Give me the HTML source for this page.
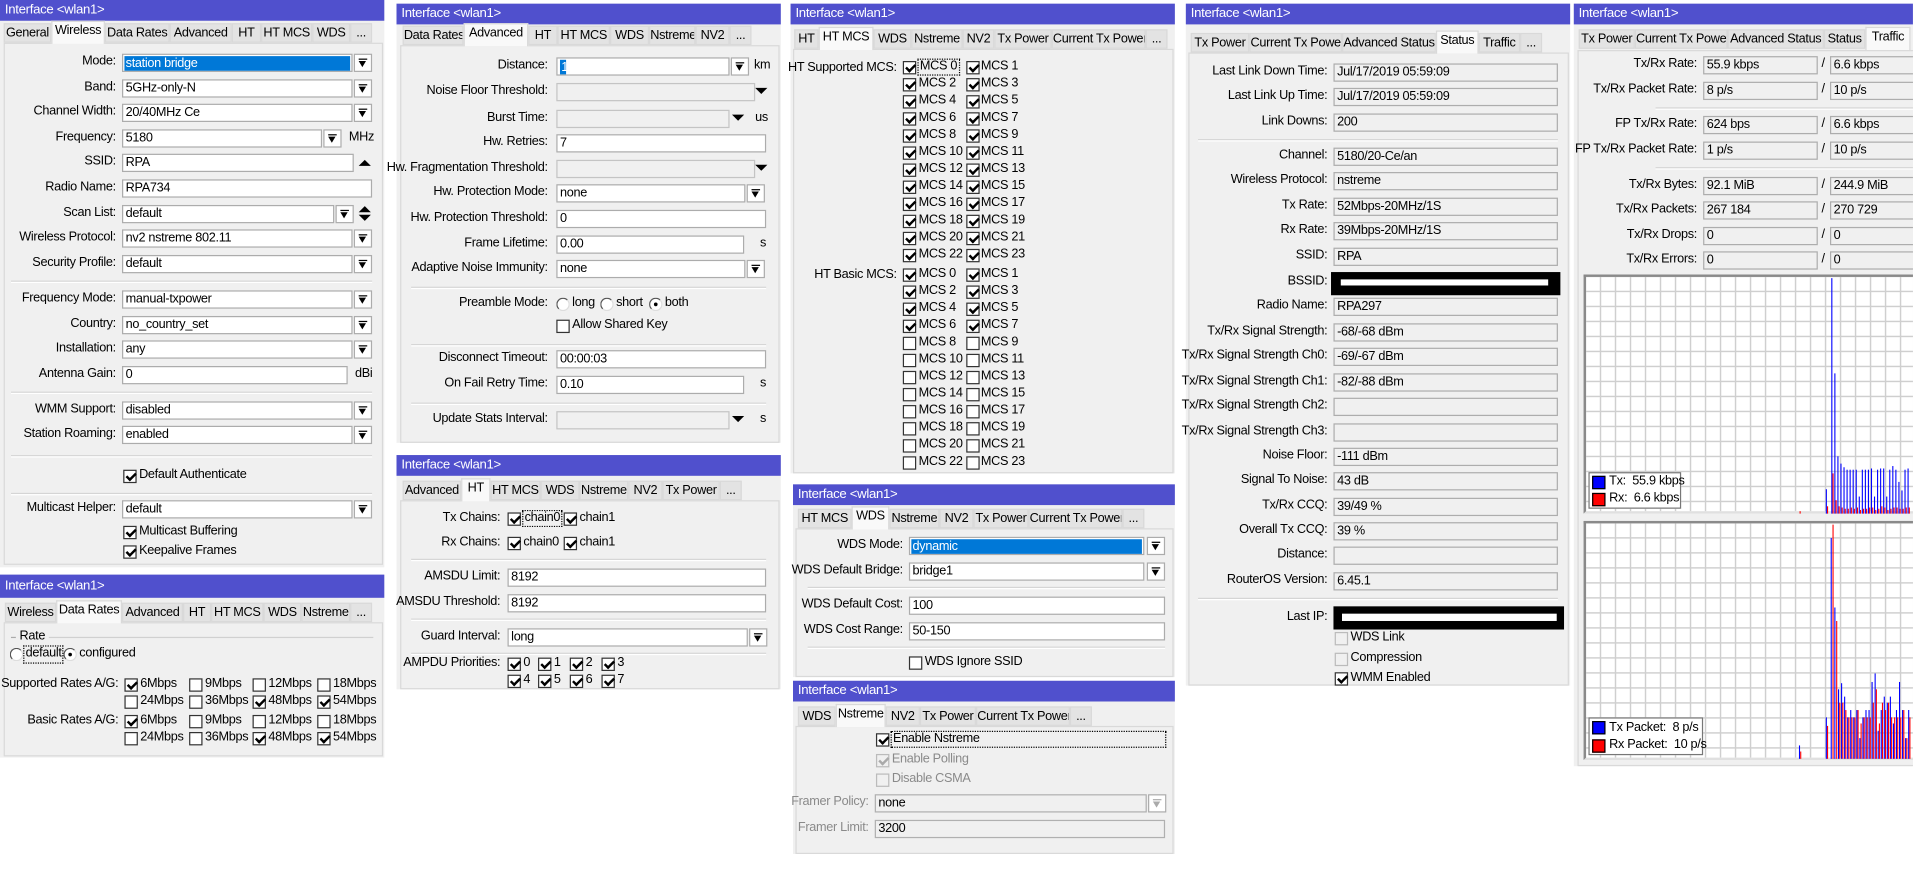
<!DOCTYPE html>
<html><head><meta charset="utf-8"><style>
*{box-sizing:border-box}
html,body{margin:0;padding:0;background:#fff;overflow:hidden}
#w{position:absolute;left:0;top:0;width:1568px;height:728px;transform:scale(1.22);transform-origin:0 0;overflow:hidden;font-family:"Liberation Sans",sans-serif;font-size:10.4px;letter-spacing:-0.25px;color:#000}
#w div,#w span{position:absolute;white-space:nowrap}
.p{background:#f0f0f0}
.t{background:#5050cd;color:#fff;height:17px;line-height:17px;padding-left:4px;font-size:10.8px}
.tb{height:16px;line-height:15px;border:1px solid #d9d9d9;background:#e3e3e3;text-align:center;overflow:hidden}
.tb.a{background:#f9f9f9;height:19px;border-bottom:none;line-height:15px}
.cb{border:1px solid #d9d9d9;background:#f0f0f0}
.l{text-align:right;line-height:14px}
.f{height:15px;line-height:13px;background:#fff;border:1px solid #acacac;padding-left:2px;overflow:hidden}
.f.g{background:#f0f0f0;border-color:#adadad}
.f.d{background:#f0f0f0;border-color:#c4c4c4}
.s{background:#0078d7;color:#fff;position:static!important;display:inline-block;padding:0 1px;width:100%}
.b{width:15px;height:15px;border:1px solid #acacac;background:#fff}
.b::before{content:"";position:absolute;left:3px;top:3px;width:7px;height:1px;background:#000}
.b::after{content:"";position:absolute;left:3px;top:5px;border-left:3.5px solid transparent;border-right:3.5px solid transparent;border-top:5px solid #000}
.b.x::before{background:#aaa}.b.x::after{border-top-color:#aaa}
.tr{width:0;height:0;border-left:5px solid transparent;border-right:5px solid transparent;border-top:5px solid #000}
.c{width:11px;height:11px;border:1px solid #333;background:#fff}
.c.k::after{content:"";position:absolute;left:3px;top:0px;width:3px;height:6px;border:solid #000;border-width:0 2px 2px 0;transform:rotate(45deg)}
.c.x{border-color:#bbb;background:#f0f0f0}.c.x.k::after{border-color:#aaa}
.r{width:11px;height:11px;border-radius:50%;border:1px solid #555;border-right-color:#ddd;border-bottom-color:#ddd;background:#fff}
.r.on::after{content:"";position:absolute;left:3px;top:3px;width:3px;height:3px;border-radius:50%;background:#000}
.sp{height:2px;border-top:1px solid #d5d5d5;border-bottom:1px solid #fff}
.u{line-height:14px}
.gr{background-color:#fff;border:2px solid #8a8a8a;border-right:none;border-bottom-color:#e0e0e0;background-image:linear-gradient(#cfcfcf 1px,transparent 1px),linear-gradient(90deg,#cfcfcf 1px,transparent 1px);background-size:12.3px 12.3px;background-position:-1px -1px}
.lg{background:#fff;border:1px solid #777}
.lg i{position:absolute;width:11px;height:11px;border:1px solid #000}
.gy{color:#8a8a8a}
</style></head><body><div id="w">

<!-- P1 Wireless -->
<div class="p" style="left:0;top:0;width:315px;height:465px"></div>
<div class="t" style="left:0;top:0;width:315px">Interface &lt;wlan1&gt;</div>
<div class="cb" style="left:3px;top:35px;width:311px;height:428px"></div>
<div class="tb" style="left:3px;top:19px;width:39px">General</div>
<div class="tb a" style="left:42px;top:17px;width:44px">Wireless</div>
<div class="tb" style="left:86px;top:19px;width:53px">Data Rates</div>
<div class="tb" style="left:139px;top:19px;width:51px">Advanced</div>
<div class="tb" style="left:190px;top:19px;width:24px">HT</div>
<div class="tb" style="left:214px;top:19px;width:42px">HT MCS</div>
<div class="tb" style="left:256px;top:19px;width:31px">WDS</div>
<div class="tb" style="left:287px;top:19px;width:18px">...</div>

<div class="l" style="right:1473px;top:44px">Mode:</div><div class="f" style="left:100px;top:44px;width:189px;padding:1px"><span class="s">station bridge</span></div><div class="b" style="left:290px;top:44px"></div>
<div class="l" style="right:1473px;top:65px">Band:</div><div class="f" style="left:100px;top:65px;width:189px">5GHz-only-N</div><div class="b" style="left:290px;top:65px"></div>
<div class="l" style="right:1473px;top:85px">Channel Width:</div><div class="f" style="left:100px;top:85px;width:189px">20/40MHz Ce</div><div class="b" style="left:290px;top:85px"></div>
<div class="l" style="right:1473px;top:106px">Frequency:</div><div class="f" style="left:100px;top:106px;width:164px">5180</div><div class="b" style="left:265px;top:106px"></div><div class="u" style="left:286px;top:106px">MHz</div>
<div class="l" style="right:1473px;top:126px">SSID:</div><div class="f" style="left:100px;top:126px;width:190px">RPA</div><div class="tr" style="left:294px;top:131px;border-top:none;border-bottom:5px solid #000"></div>
<div class="l" style="right:1473px;top:147px">Radio Name:</div><div class="f" style="left:100px;top:147px;width:205px">RPA734</div>
<div class="l" style="right:1473px;top:168px">Scan List:</div><div class="f" style="left:100px;top:168px;width:174px">default</div><div class="b" style="left:275px;top:168px"></div><div class="tr" style="left:294px;top:169px;border-top:none;border-bottom:5px solid #000"></div><div class="tr" style="left:294px;top:176px"></div>
<div class="l" style="right:1473px;top:188px">Wireless Protocol:</div><div class="f" style="left:100px;top:188px;width:189px">nv2 nstreme 802.11</div><div class="b" style="left:290px;top:188px"></div>
<div class="l" style="right:1473px;top:209px">Security Profile:</div><div class="f" style="left:100px;top:209px;width:189px">default</div><div class="b" style="left:290px;top:209px"></div>
<div class="sp" style="left:9px;top:230px;width:296px"></div>
<div class="l" style="right:1473px;top:238px">Frequency Mode:</div><div class="f" style="left:100px;top:238px;width:189px">manual-txpower</div><div class="b" style="left:290px;top:238px"></div>
<div class="l" style="right:1473px;top:259px">Country:</div><div class="f" style="left:100px;top:259px;width:189px">no_country_set</div><div class="b" style="left:290px;top:259px"></div>
<div class="l" style="right:1473px;top:279px">Installation:</div><div class="f" style="left:100px;top:279px;width:189px">any</div><div class="b" style="left:290px;top:279px"></div>
<div class="l" style="right:1473px;top:300px">Antenna Gain:</div><div class="f" style="left:100px;top:300px;width:185px">0</div><div class="u" style="left:291px;top:300px">dBi</div>
<div class="sp" style="left:9px;top:321px;width:296px"></div>
<div class="l" style="right:1473px;top:329px">WMM Support:</div><div class="f" style="left:100px;top:329px;width:189px">disabled</div><div class="b" style="left:290px;top:329px"></div>
<div class="l" style="right:1473px;top:349px">Station Roaming:</div><div class="f" style="left:100px;top:349px;width:189px">enabled</div><div class="b" style="left:290px;top:349px"></div>
<div class="sp" style="left:9px;top:373px;width:296px"></div>
<div class="c k" style="left:101px;top:385px"></div><div class="u" style="left:114px;top:383px">Default Authenticate</div>
<div class="sp" style="left:9px;top:404px;width:296px"></div>
<div class="l" style="right:1473px;top:410px">Multicast Helper:</div><div class="f" style="left:100px;top:410px;width:189px">default</div><div class="b" style="left:290px;top:410px"></div>
<div class="c k" style="left:101px;top:431px"></div><div class="u" style="left:114px;top:429px">Multicast Buffering</div>
<div class="c k" style="left:101px;top:447px"></div><div class="u" style="left:114px;top:445px">Keepalive Frames</div>

<!-- P2 Data Rates -->
<div class="p" style="left:0;top:471px;width:315px;height:150px"></div>
<div class="t" style="left:0;top:471px;width:315px;height:19px;line-height:19px">Interface &lt;wlan1&gt;</div>
<div class="cb" style="left:3px;top:510px;width:311px;height:110px"></div>
<div class="tb" style="left:4px;top:494px;width:42px">Wireless</div>
<div class="tb a" style="left:46px;top:492px;width:54px">Data Rates</div>
<div class="tb" style="left:100px;top:494px;width:50px">Advanced</div>
<div class="tb" style="left:150px;top:494px;width:23px">HT</div>
<div class="tb" style="left:173px;top:494px;width:43px">HT MCS</div>
<div class="tb" style="left:216px;top:494px;width:31px">WDS</div>
<div class="tb" style="left:247px;top:494px;width:40px">Nstreme</div>
<div class="tb" style="left:287px;top:494px;width:18px">...</div>
<div style="left:9px;top:522px;width:4px;height:1px;background:#aaa"></div>
<div class="u" style="left:16px;top:515px">Rate</div>
<div style="left:40px;top:522px;width:266px;height:1px;background:#d0d0d0"></div>
<div class="r" style="left:8px;top:531px"></div><div class="u" style="left:19px;top:529px;border:1px dotted #000;padding:0 1px;line-height:12px;height:15px">default</div>
<div class="r on" style="left:52px;top:531px"></div><div class="u" style="left:65px;top:529px">configured</div>
<div class="l" style="right:1471px;top:554px">Supported Rates A/G:</div>
<div class="l" style="right:1471px;top:584px">Basic Rates A/G:</div>
<div class="c k" style="left:102px;top:556px"></div><div class="u" style="left:115px;top:554px">6Mbps</div>
<div class="c" style="left:155px;top:556px"></div><div class="u" style="left:168px;top:554px">9Mbps</div>
<div class="c" style="left:207px;top:556px"></div><div class="u" style="left:220px;top:554px">12Mbps</div>
<div class="c" style="left:260px;top:556px"></div><div class="u" style="left:273px;top:554px">18Mbps</div>
<div class="c" style="left:102px;top:570px"></div><div class="u" style="left:115px;top:568px">24Mbps</div>
<div class="c" style="left:155px;top:570px"></div><div class="u" style="left:168px;top:568px">36Mbps</div>
<div class="c k" style="left:207px;top:570px"></div><div class="u" style="left:220px;top:568px">48Mbps</div>
<div class="c k" style="left:260px;top:570px"></div><div class="u" style="left:273px;top:568px">54Mbps</div>
<div class="c k" style="left:102px;top:586px"></div><div class="u" style="left:115px;top:584px">6Mbps</div>
<div class="c" style="left:155px;top:586px"></div><div class="u" style="left:168px;top:584px">9Mbps</div>
<div class="c" style="left:207px;top:586px"></div><div class="u" style="left:220px;top:584px">12Mbps</div>
<div class="c" style="left:260px;top:586px"></div><div class="u" style="left:273px;top:584px">18Mbps</div>
<div class="c" style="left:102px;top:600px"></div><div class="u" style="left:115px;top:598px">24Mbps</div>
<div class="c" style="left:155px;top:600px"></div><div class="u" style="left:168px;top:598px">36Mbps</div>
<div class="c k" style="left:207px;top:600px"></div><div class="u" style="left:220px;top:598px">48Mbps</div>
<div class="c k" style="left:260px;top:600px"></div><div class="u" style="left:273px;top:598px">54Mbps</div>

<!-- P3 Advanced -->
<div class="p" style="left:325px;top:3px;width:315px;height:360px"></div>
<div class="t" style="left:325px;top:3px;width:315px">Interface &lt;wlan1&gt;</div>
<div class="cb" style="left:328px;top:37px;width:311px;height:326px"></div>
<div class="tb" style="left:330px;top:21px;width:50px">Data Rates</div>
<div class="tb a" style="left:380px;top:19px;width:53px">Advanced</div>
<div class="tb" style="left:433px;top:21px;width:24px">HT</div>
<div class="tb" style="left:457px;top:21px;width:43px">HT MCS</div>
<div class="tb" style="left:500px;top:21px;width:32px">WDS</div>
<div class="tb" style="left:532px;top:21px;width:38px">Nstreme</div>
<div class="tb" style="left:570px;top:21px;width:28px">NV2</div>
<div class="tb" style="left:598px;top:21px;width:18px">...</div>
<div class="l" style="right:1119px;top:47px">Distance:</div><div class="f" style="left:456px;top:47px;width:142px;padding:1px 0 0 2px"><span class="s" style="width:5px">1</span></div><div class="b" style="left:599px;top:47px"></div><div class="u" style="left:618px;top:47px">km</div>
<div class="l" style="right:1119px;top:68px">Noise Floor Threshold:</div><div class="f d" style="left:456px;top:68px;width:163px"></div><div class="tr" style="left:619px;top:72px"></div>
<div class="l" style="right:1119px;top:90px">Burst Time:</div><div class="f d" style="left:456px;top:90px;width:142px"></div><div class="tr" style="left:600px;top:94px"></div><div class="u" style="left:619px;top:90px">us</div>
<div class="l" style="right:1119px;top:110px">Hw. Retries:</div><div class="f" style="left:456px;top:110px;width:172px">7</div>
<div class="l" style="right:1119px;top:131px">Hw. Fragmentation Threshold:</div><div class="f d" style="left:456px;top:131px;width:163px"></div><div class="tr" style="left:619px;top:135px"></div>
<div class="l" style="right:1119px;top:151px">Hw. Protection Mode:</div><div class="f" style="left:456px;top:151px;width:155px">none</div><div class="b" style="left:612px;top:151px"></div>
<div class="l" style="right:1119px;top:172px">Hw. Protection Threshold:</div><div class="f" style="left:456px;top:172px;width:172px">0</div>
<div class="l" style="right:1119px;top:193px">Frame Lifetime:</div><div class="f" style="left:456px;top:193px;width:154px">0.00</div><div class="u" style="left:623px;top:193px">s</div>
<div class="l" style="right:1119px;top:213px">Adaptive Noise Immunity:</div><div class="f" style="left:456px;top:213px;width:155px">none</div><div class="b" style="left:612px;top:213px"></div>
<div class="sp" style="left:337px;top:235px;width:291px"></div>
<div class="l" style="right:1119px;top:242px">Preamble Mode:</div>
<div class="r" style="left:456px;top:244px"></div><div class="u" style="left:469px;top:242px">long</div>
<div class="r" style="left:492px;top:244px"></div><div class="u" style="left:505px;top:242px">short</div>
<div class="r on" style="left:532px;top:244px"></div><div class="u" style="left:545px;top:242px">both</div>
<div class="c" style="left:456px;top:262px"></div><div class="u" style="left:469px;top:260px">Allow Shared Key</div>
<div class="sp" style="left:337px;top:282px;width:291px"></div>
<div class="l" style="right:1119px;top:287px">Disconnect Timeout:</div><div class="f" style="left:456px;top:287px;width:172px">00:00:03</div>
<div class="l" style="right:1119px;top:308px">On Fail Retry Time:</div><div class="f" style="left:456px;top:308px;width:154px">0.10</div><div class="u" style="left:623px;top:308px">s</div>
<div class="sp" style="left:337px;top:330px;width:291px"></div>
<div class="l" style="right:1119px;top:337px">Update Stats Interval:</div><div class="f d" style="left:456px;top:337px;width:142px"></div><div class="tr" style="left:600px;top:341px"></div><div class="u" style="left:623px;top:337px">s</div>

<!-- P4 HT -->
<div class="p" style="left:325px;top:373px;width:315px;height:192px"></div>
<div class="t" style="left:325px;top:373px;width:315px">Interface &lt;wlan1&gt;</div>
<div class="cb" style="left:328px;top:410px;width:311px;height:155px"></div>
<div class="tb" style="left:330px;top:394px;width:48px">Advanced</div>
<div class="tb a" style="left:378px;top:392px;width:24px">HT</div>
<div class="tb" style="left:402px;top:394px;width:41px">HT MCS</div>
<div class="tb" style="left:443px;top:394px;width:32px">WDS</div>
<div class="tb" style="left:475px;top:394px;width:40px">Nstreme</div>
<div class="tb" style="left:515px;top:394px;width:28px">NV2</div>
<div class="tb" style="left:543px;top:394px;width:47px">Tx Power</div>
<div class="tb" style="left:590px;top:394px;width:18px">...</div>
<div class="l" style="right:1158px;top:418px">Tx Chains:</div>
<div class="c k" style="left:416px;top:420px"></div><div class="u" style="left:428px;top:418px;border:1px dotted #000;line-height:12px;height:14px;padding:0 1px">chain0</div>
<div class="c k" style="left:462px;top:420px"></div><div class="u" style="left:475px;top:418px">chain1</div>
<div class="l" style="right:1158px;top:438px">Rx Chains:</div>
<div class="c k" style="left:416px;top:440px"></div><div class="u" style="left:429px;top:438px">chain0</div>
<div class="c k" style="left:462px;top:440px"></div><div class="u" style="left:475px;top:438px">chain1</div>
<div class="sp" style="left:337px;top:458px;width:291px"></div>
<div class="l" style="right:1158px;top:466px">AMSDU Limit:</div><div class="f" style="left:416px;top:466px;width:212px">8192</div>
<div class="l" style="right:1158px;top:487px">AMSDU Threshold:</div><div class="f" style="left:416px;top:487px;width:212px">8192</div>
<div class="sp" style="left:337px;top:507px;width:291px"></div>
<div class="l" style="right:1158px;top:515px">Guard Interval:</div><div class="f" style="left:416px;top:515px;width:197px">long</div><div class="b" style="left:614px;top:515px"></div>
<div class="sp" style="left:337px;top:535px;width:291px"></div>
<div class="l" style="right:1158px;top:537px">AMPDU Priorities:</div>
<div class="c k" style="left:416px;top:539px"></div><div class="u" style="left:429px;top:537px">0</div>
<div class="c k" style="left:441px;top:539px"></div><div class="u" style="left:454px;top:537px">1</div>
<div class="c k" style="left:467px;top:539px"></div><div class="u" style="left:480px;top:537px">2</div>
<div class="c k" style="left:493px;top:539px"></div><div class="u" style="left:506px;top:537px">3</div>
<div class="c k" style="left:416px;top:553px"></div><div class="u" style="left:429px;top:551px">4</div>
<div class="c k" style="left:441px;top:553px"></div><div class="u" style="left:454px;top:551px">5</div>
<div class="c k" style="left:467px;top:553px"></div><div class="u" style="left:480px;top:551px">6</div>
<div class="c k" style="left:493px;top:553px"></div><div class="u" style="left:506px;top:551px">7</div>

<!-- P5 HT MCS -->
<div class="p" style="left:648px;top:3px;width:315px;height:385px"></div>
<div class="t" style="left:648px;top:3px;width:315px">Interface &lt;wlan1&gt;</div>
<div class="cb" style="left:650px;top:40px;width:312px;height:348px"></div>
<div class="tb" style="left:651px;top:24px;width:20px">HT</div>
<div class="tb a" style="left:671px;top:22px;width:45px">HT MCS</div>
<div class="tb" style="left:716px;top:24px;width:31px">WDS</div>
<div class="tb" style="left:747px;top:24px;width:42px">Nstreme</div>
<div class="tb" style="left:789px;top:24px;width:26px">NV2</div>
<div class="tb" style="left:815px;top:24px;width:47px">Tx Power</div>
<div class="tb" style="left:862px;top:24px;width:77px">Current Tx Power</div>
<div class="tb" style="left:939px;top:24px;width:18px">...</div>
<div class="l" style="right:833px;top:49px">HT Supported MCS:</div>
<div class="l" style="right:833px;top:219px">HT Basic MCS:</div>
<div style="left:740px;top:50px;width:0;height:0">
<div class="c k" style="left:0;top:0"></div><div class="u" style="left:12px;top:-2px;border:1px dotted #000;line-height:12px;height:14px;padding:0 1px">MCS 0</div><div class="c k" style="left:52px;top:0"></div><div class="u" style="left:64px;top:-2px">MCS 1</div>
<div class="c k" style="left:0;top:14px"></div><div class="u" style="left:13px;top:12px">MCS 2</div><div class="c k" style="left:52px;top:14px"></div><div class="u" style="left:64px;top:12px">MCS 3</div>
<div class="c k" style="left:0;top:28px"></div><div class="u" style="left:13px;top:26px">MCS 4</div><div class="c k" style="left:52px;top:28px"></div><div class="u" style="left:64px;top:26px">MCS 5</div>
<div class="c k" style="left:0;top:42px"></div><div class="u" style="left:13px;top:40px">MCS 6</div><div class="c k" style="left:52px;top:42px"></div><div class="u" style="left:64px;top:40px">MCS 7</div>
<div class="c k" style="left:0;top:56px"></div><div class="u" style="left:13px;top:54px">MCS 8</div><div class="c k" style="left:52px;top:56px"></div><div class="u" style="left:64px;top:54px">MCS 9</div>
<div class="c k" style="left:0;top:70px"></div><div class="u" style="left:13px;top:68px">MCS 10</div><div class="c k" style="left:52px;top:70px"></div><div class="u" style="left:64px;top:68px">MCS 11</div>
<div class="c k" style="left:0;top:84px"></div><div class="u" style="left:13px;top:82px">MCS 12</div><div class="c k" style="left:52px;top:84px"></div><div class="u" style="left:64px;top:82px">MCS 13</div>
<div class="c k" style="left:0;top:98px"></div><div class="u" style="left:13px;top:96px">MCS 14</div><div class="c k" style="left:52px;top:98px"></div><div class="u" style="left:64px;top:96px">MCS 15</div>
<div class="c k" style="left:0;top:112px"></div><div class="u" style="left:13px;top:110px">MCS 16</div><div class="c k" style="left:52px;top:112px"></div><div class="u" style="left:64px;top:110px">MCS 17</div>
<div class="c k" style="left:0;top:126px"></div><div class="u" style="left:13px;top:124px">MCS 18</div><div class="c k" style="left:52px;top:126px"></div><div class="u" style="left:64px;top:124px">MCS 19</div>
<div class="c k" style="left:0;top:140px"></div><div class="u" style="left:13px;top:138px">MCS 20</div><div class="c k" style="left:52px;top:140px"></div><div class="u" style="left:64px;top:138px">MCS 21</div>
<div class="c k" style="left:0;top:154px"></div><div class="u" style="left:13px;top:152px">MCS 22</div><div class="c k" style="left:52px;top:154px"></div><div class="u" style="left:64px;top:152px">MCS 23</div>
</div>
<div style="left:740px;top:220px;width:0;height:0">
<div class="c k" style="left:0;top:0"></div><div class="u" style="left:13px;top:-2px">MCS 0</div><div class="c k" style="left:52px;top:0"></div><div class="u" style="left:64px;top:-2px">MCS 1</div>
<div class="c k" style="left:0;top:14px"></div><div class="u" style="left:13px;top:12px">MCS 2</div><div class="c k" style="left:52px;top:14px"></div><div class="u" style="left:64px;top:12px">MCS 3</div>
<div class="c k" style="left:0;top:28px"></div><div class="u" style="left:13px;top:26px">MCS 4</div><div class="c k" style="left:52px;top:28px"></div><div class="u" style="left:64px;top:26px">MCS 5</div>
<div class="c k" style="left:0;top:42px"></div><div class="u" style="left:13px;top:40px">MCS 6</div><div class="c k" style="left:52px;top:42px"></div><div class="u" style="left:64px;top:40px">MCS 7</div>
<div class="c" style="left:0;top:56px"></div><div class="u" style="left:13px;top:54px">MCS 8</div><div class="c" style="left:52px;top:56px"></div><div class="u" style="left:64px;top:54px">MCS 9</div>
<div class="c" style="left:0;top:70px"></div><div class="u" style="left:13px;top:68px">MCS 10</div><div class="c" style="left:52px;top:70px"></div><div class="u" style="left:64px;top:68px">MCS 11</div>
<div class="c" style="left:0;top:84px"></div><div class="u" style="left:13px;top:82px">MCS 12</div><div class="c" style="left:52px;top:84px"></div><div class="u" style="left:64px;top:82px">MCS 13</div>
<div class="c" style="left:0;top:98px"></div><div class="u" style="left:13px;top:96px">MCS 14</div><div class="c" style="left:52px;top:98px"></div><div class="u" style="left:64px;top:96px">MCS 15</div>
<div class="c" style="left:0;top:112px"></div><div class="u" style="left:13px;top:110px">MCS 16</div><div class="c" style="left:52px;top:112px"></div><div class="u" style="left:64px;top:110px">MCS 17</div>
<div class="c" style="left:0;top:126px"></div><div class="u" style="left:13px;top:124px">MCS 18</div><div class="c" style="left:52px;top:126px"></div><div class="u" style="left:64px;top:124px">MCS 19</div>
<div class="c" style="left:0;top:140px"></div><div class="u" style="left:13px;top:138px">MCS 20</div><div class="c" style="left:52px;top:140px"></div><div class="u" style="left:64px;top:138px">MCS 21</div>
<div class="c" style="left:0;top:154px"></div><div class="u" style="left:13px;top:152px">MCS 22</div><div class="c" style="left:52px;top:154px"></div><div class="u" style="left:64px;top:152px">MCS 23</div>
</div>

<!-- P6 WDS -->
<div class="p" style="left:650px;top:397px;width:313px;height:158px"></div>
<div class="t" style="left:650px;top:397px;width:313px">Interface &lt;wlan1&gt;</div>
<div class="cb" style="left:652px;top:433px;width:310px;height:122px"></div>
<div class="tb" style="left:654px;top:417px;width:44px">HT MCS</div>
<div class="tb a" style="left:698px;top:415px;width:31px">WDS</div>
<div class="tb" style="left:729px;top:417px;width:41px">Nstreme</div>
<div class="tb" style="left:770px;top:417px;width:28px">NV2</div>
<div class="tb" style="left:798px;top:417px;width:45px">Tx Power</div>
<div class="tb" style="left:843px;top:417px;width:77px">Current Tx Power</div>
<div class="tb" style="left:920px;top:417px;width:18px">...</div>
<div class="l" style="right:828px;top:440px">WDS Mode:</div><div class="f" style="left:745px;top:440px;width:193px;padding:1px"><span class="s">dynamic</span></div><div class="b" style="left:940px;top:440px"></div>
<div class="l" style="right:828px;top:461px">WDS Default Bridge:</div><div class="f" style="left:745px;top:461px;width:193px">bridge1</div><div class="b" style="left:940px;top:461px"></div>
<div class="sp" style="left:662px;top:481px;width:293px"></div>
<div class="l" style="right:828px;top:489px">WDS Default Cost:</div><div class="f" style="left:745px;top:489px;width:210px">100</div>
<div class="l" style="right:828px;top:510px">WDS Cost Range:</div><div class="f" style="left:745px;top:510px;width:210px">50-150</div>
<div class="sp" style="left:662px;top:530px;width:293px"></div>
<div class="c" style="left:745px;top:538px"></div><div class="u" style="left:758px;top:536px">WDS Ignore SSID</div>

<!-- P7 Nstreme -->
<div class="p" style="left:650px;top:558px;width:313px;height:142px"></div>
<div class="t" style="left:650px;top:558px;width:313px">Interface &lt;wlan1&gt;</div>
<div class="cb" style="left:652px;top:595px;width:310px;height:105px"></div>
<div class="tb" style="left:654px;top:579px;width:31px">WDS</div>
<div class="tb a" style="left:685px;top:577px;width:41px">Nstreme</div>
<div class="tb" style="left:726px;top:579px;width:28px">NV2</div>
<div class="tb" style="left:754px;top:579px;width:46px">Tx Power</div>
<div class="tb" style="left:800px;top:579px;width:77px">Current Tx Power</div>
<div class="tb" style="left:877px;top:579px;width:18px">...</div>
<div class="c k" style="left:718px;top:601px"></div><div class="u" style="left:730px;top:599px;width:226px;border:1px dotted #000;line-height:12px;height:14px;padding-left:1px">Enable Nstreme</div>
<div class="c x k" style="left:718px;top:618px"></div><div class="u gy" style="left:731px;top:616px">Enable Polling</div>
<div class="c x" style="left:718px;top:634px"></div><div class="u gy" style="left:731px;top:632px">Disable CSMA</div>
<div class="l gy" style="right:856px;top:651px">Framer Policy:</div><div class="f d" style="left:717px;top:651px;width:223px;border-color:#b0b0b0">none</div><div class="b x" style="left:941px;top:651px"></div>
<div class="l gy" style="right:856px;top:672px">Framer Limit:</div><div class="f d" style="left:717px;top:672px;width:238px;border-color:#b0b0b0">3200</div>

<!-- P8 Status -->
<div class="p" style="left:972px;top:3px;width:315px;height:559px"></div>
<div class="t" style="left:972px;top:3px;width:315px">Interface &lt;wlan1&gt;</div>
<div class="cb" style="left:974px;top:43px;width:312px;height:519px"></div>
<div class="tb" style="left:976px;top:27px;width:48px">Tx Power</div>
<div class="tb" style="left:1024px;top:27px;width:76px">Current Tx Power</div>
<div class="tb" style="left:1100px;top:27px;width:77px">Advanced Status</div>
<div class="tb a" style="left:1177px;top:25px;width:35px">Status</div>
<div class="tb" style="left:1212px;top:27px;width:34px">Traffic</div>
<div class="tb" style="left:1246px;top:27px;width:18px">...</div>
<div class="l" style="right:480px;top:52px">Last Link Down Time:</div><div class="f g" style="left:1093px;top:52px;width:184px">Jul/17/2019 05:59:09</div>
<div class="l" style="right:480px;top:72px">Last Link Up Time:</div><div class="f g" style="left:1093px;top:72px;width:184px">Jul/17/2019 05:59:09</div>
<div class="l" style="right:480px;top:93px">Link Downs:</div><div class="f g" style="left:1093px;top:93px;width:184px">200</div>
<div class="sp" style="left:982px;top:114px;width:295px"></div>
<div class="l" style="right:480px;top:121px">Channel:</div><div class="f g" style="left:1093px;top:121px;width:184px">5180/20-Ce/an</div>
<div class="l" style="right:480px;top:141px">Wireless Protocol:</div><div class="f g" style="left:1093px;top:141px;width:184px">nstreme</div>
<div class="l" style="right:480px;top:162px">Tx Rate:</div><div class="f g" style="left:1093px;top:162px;width:184px">52Mbps-20MHz/1S</div>
<div class="l" style="right:480px;top:182px">Rx Rate:</div><div class="f g" style="left:1093px;top:182px;width:184px">39Mbps-20MHz/1S</div>
<div class="l" style="right:480px;top:203px">SSID:</div><div class="f g" style="left:1093px;top:203px;width:184px">RPA</div>
<div class="l" style="right:480px;top:224px">BSSID:</div><div style="left:1091px;top:223px;width:188px;height:19px;background:#000"><div style="left:8px;top:6px;width:170px;height:5px;background:#fff"></div></div>
<div class="l" style="right:480px;top:244px">Radio Name:</div><div class="f g" style="left:1093px;top:244px;width:184px">RPA297</div>
<div class="l" style="right:480px;top:265px">Tx/Rx Signal Strength:</div><div class="f g" style="left:1093px;top:265px;width:184px">-68/-68 dBm</div>
<div class="l" style="right:480px;top:285px">Tx/Rx Signal Strength Ch0:</div><div class="f g" style="left:1093px;top:285px;width:184px">-69/-67 dBm</div>
<div class="l" style="right:480px;top:306px">Tx/Rx Signal Strength Ch1:</div><div class="f g" style="left:1093px;top:306px;width:184px">-82/-88 dBm</div>
<div class="l" style="right:480px;top:326px">Tx/Rx Signal Strength Ch2:</div><div class="f g" style="left:1093px;top:326px;width:184px"></div>
<div class="l" style="right:480px;top:347px">Tx/Rx Signal Strength Ch3:</div><div class="f g" style="left:1093px;top:347px;width:184px"></div>
<div class="l" style="right:480px;top:367px">Noise Floor:</div><div class="f g" style="left:1093px;top:367px;width:184px">-111 dBm</div>
<div class="l" style="right:480px;top:387px">Signal To Noise:</div><div class="f g" style="left:1093px;top:387px;width:184px">43 dB</div>
<div class="l" style="right:480px;top:408px">Tx/Rx CCQ:</div><div class="f g" style="left:1093px;top:408px;width:184px">39/49 %</div>
<div class="l" style="right:480px;top:428px">Overall Tx CCQ:</div><div class="f g" style="left:1093px;top:428px;width:184px">39 %</div>
<div class="l" style="right:480px;top:448px">Distance:</div><div class="f g" style="left:1093px;top:448px;width:184px"></div>
<div class="l" style="right:480px;top:469px">RouterOS Version:</div><div class="f g" style="left:1093px;top:469px;width:184px">6.45.1</div>
<div class="sp" style="left:982px;top:490px;width:295px"></div>
<div class="l" style="right:480px;top:499px">Last IP:</div><div style="left:1093px;top:497px;width:189px;height:19px;background:#000"><div style="left:7px;top:6px;width:176px;height:6px;background:#fff"></div></div>
<div class="c x" style="left:1094px;top:518px"></div><div class="u" style="left:1107px;top:516px">WDS Link</div>
<div class="c x" style="left:1094px;top:535px"></div><div class="u" style="left:1107px;top:533px">Compression</div>
<div class="c k" style="left:1094px;top:551px"></div><div class="u" style="left:1107px;top:549px">WMM Enabled</div>

<!-- P9 Traffic -->
<div class="p" style="left:1290px;top:3px;width:278px;height:625px"></div>
<div class="t" style="left:1290px;top:3px;width:278px">Interface &lt;wlan1&gt;</div>
<div class="cb" style="left:1293px;top:41px;width:280px;height:587px"></div>
<div class="tb" style="left:1294px;top:24px;width:46px">Tx Power</div>
<div class="tb" style="left:1340px;top:24px;width:76px">Current Tx Power</div>
<div class="tb" style="left:1416px;top:24px;width:79px">Advanced Status</div>
<div class="tb" style="left:1495px;top:24px;width:34px">Status</div>
<div class="tb a" style="left:1529px;top:22px;width:37px">Traffic</div>
<div class="l" style="right:177px;top:46px">Tx/Rx Rate:</div><div class="f g" style="left:1396px;top:46px;width:94px">55.9 kbps</div><div class="u" style="left:1493px;top:46px">/</div><div class="f g" style="left:1500px;top:46px;width:80px">6.6 kbps</div>
<div class="l" style="right:177px;top:67px">Tx/Rx Packet Rate:</div><div class="f g" style="left:1396px;top:67px;width:94px">8 p/s</div><div class="u" style="left:1493px;top:67px">/</div><div class="f g" style="left:1500px;top:67px;width:80px">10 p/s</div>
<div class="sp" style="left:1357px;top:88px;width:220px"></div>
<div class="l" style="right:177px;top:95px">FP Tx/Rx Rate:</div><div class="f g" style="left:1396px;top:95px;width:94px">624 bps</div><div class="u" style="left:1493px;top:95px">/</div><div class="f g" style="left:1500px;top:95px;width:80px">6.6 kbps</div>
<div class="l" style="right:177px;top:116px">FP Tx/Rx Packet Rate:</div><div class="f g" style="left:1396px;top:116px;width:94px">1 p/s</div><div class="u" style="left:1493px;top:116px">/</div><div class="f g" style="left:1500px;top:116px;width:80px">10 p/s</div>
<div class="sp" style="left:1357px;top:137px;width:220px"></div>
<div class="l" style="right:177px;top:145px">Tx/Rx Bytes:</div><div class="f g" style="left:1396px;top:145px;width:94px">92.1 MiB</div><div class="u" style="left:1493px;top:145px">/</div><div class="f g" style="left:1500px;top:145px;width:80px">244.9 MiB</div>
<div class="l" style="right:177px;top:165px">Tx/Rx Packets:</div><div class="f g" style="left:1396px;top:165px;width:94px">267 184</div><div class="u" style="left:1493px;top:165px">/</div><div class="f g" style="left:1500px;top:165px;width:80px">270 729</div>
<div class="l" style="right:177px;top:186px">Tx/Rx Drops:</div><div class="f g" style="left:1396px;top:186px;width:94px">0</div><div class="u" style="left:1493px;top:186px">/</div><div class="f g" style="left:1500px;top:186px;width:80px">0</div>
<div class="l" style="right:177px;top:206px">Tx/Rx Errors:</div><div class="f g" style="left:1396px;top:206px;width:94px">0</div><div class="u" style="left:1493px;top:206px">/</div><div class="f g" style="left:1500px;top:206px;width:80px">0</div>

<div class="gr" style="left:1298px;top:225px;width:275px;height:196px"></div>
<div class="gr" style="left:1298px;top:427px;width:275px;height:196px"></div>
<svg style="position:absolute;left:1299px;top:226px" width="269" height="400" viewBox="0 0 269 400">
<g stroke-width="0.9">
<line x1="176.5" y1="195" x2="176.5" y2="193" stroke="#f00"/>
<line x1="198" y1="195" x2="198" y2="175" stroke="#00f"/><line x1="199" y1="195" x2="199" y2="189" stroke="#f00"/>
<line x1="202.5" y1="195" x2="202.5" y2="2" stroke="#00f"/><line x1="203.5" y1="195" x2="203.5" y2="162" stroke="#f00"/>
<line x1="205" y1="195" x2="205" y2="80" stroke="#00f"/><line x1="206" y1="195" x2="206" y2="184" stroke="#f00"/>
<line x1="207.5" y1="195" x2="207.5" y2="148" stroke="#00f"/><line x1="208.5" y1="195" x2="208.5" y2="189" stroke="#f00"/>
<line x1="210" y1="195" x2="210" y2="154" stroke="#00f"/><line x1="211" y1="195" x2="211" y2="190" stroke="#f00"/>
<line x1="212.5" y1="195" x2="212.5" y2="157" stroke="#00f"/><line x1="213.5" y1="195" x2="213.5" y2="191" stroke="#f00"/>
<line x1="215" y1="195" x2="215" y2="159" stroke="#00f"/><line x1="216" y1="195" x2="216" y2="191" stroke="#f00"/>
<line x1="217.5" y1="195" x2="217.5" y2="159" stroke="#00f"/><line x1="218.5" y1="195" x2="218.5" y2="190" stroke="#f00"/>
<line x1="220" y1="195" x2="220" y2="159" stroke="#00f"/><line x1="221" y1="195" x2="221" y2="191" stroke="#f00"/>
<line x1="222.5" y1="195" x2="222.5" y2="159" stroke="#00f"/><line x1="223.5" y1="195" x2="223.5" y2="190" stroke="#f00"/>
<line x1="225" y1="195" x2="225" y2="181" stroke="#00f"/><line x1="226" y1="195" x2="226" y2="192" stroke="#f00"/>
<line x1="227.5" y1="195" x2="227.5" y2="159" stroke="#00f"/><line x1="228.5" y1="195" x2="228.5" y2="191" stroke="#f00"/>
<line x1="230" y1="195" x2="230" y2="159" stroke="#00f"/><line x1="231" y1="195" x2="231" y2="191" stroke="#f00"/>
<line x1="232.5" y1="195" x2="232.5" y2="159" stroke="#00f"/><line x1="233.5" y1="195" x2="233.5" y2="190" stroke="#f00"/>
<line x1="235" y1="195" x2="235" y2="158" stroke="#00f"/><line x1="236" y1="195" x2="236" y2="190" stroke="#f00"/>
<line x1="237.5" y1="195" x2="237.5" y2="181" stroke="#00f"/><line x1="238.5" y1="195" x2="238.5" y2="192" stroke="#f00"/>
<line x1="240" y1="195" x2="240" y2="159" stroke="#00f"/><line x1="241" y1="195" x2="241" y2="191" stroke="#f00"/>
<line x1="242.5" y1="195" x2="242.5" y2="158" stroke="#00f"/><line x1="243.5" y1="195" x2="243.5" y2="189" stroke="#f00"/>
<line x1="245" y1="195" x2="245" y2="158" stroke="#00f"/><line x1="246" y1="195" x2="246" y2="190" stroke="#f00"/>
<line x1="247.5" y1="195" x2="247.5" y2="181" stroke="#00f"/><line x1="248.5" y1="195" x2="248.5" y2="192" stroke="#f00"/>
<line x1="250" y1="195" x2="250" y2="159" stroke="#00f"/><line x1="251" y1="195" x2="251" y2="191" stroke="#f00"/>
<line x1="252.5" y1="195" x2="252.5" y2="156" stroke="#00f"/><line x1="253.5" y1="195" x2="253.5" y2="190" stroke="#f00"/>
<line x1="255" y1="195" x2="255" y2="159" stroke="#00f"/><line x1="256" y1="195" x2="256" y2="190" stroke="#f00"/>
<line x1="257.5" y1="195" x2="257.5" y2="169" stroke="#00f"/><line x1="258.5" y1="195" x2="258.5" y2="191" stroke="#f00"/>
<line x1="260" y1="195" x2="260" y2="176" stroke="#00f"/><line x1="261" y1="195" x2="261" y2="191" stroke="#f00"/>
<line x1="262.5" y1="195" x2="262.5" y2="159" stroke="#00f"/><line x1="263.5" y1="195" x2="263.5" y2="190" stroke="#f00"/>
<line x1="265" y1="195" x2="265" y2="158" stroke="#00f"/><line x1="266" y1="195" x2="266" y2="190" stroke="#f00"/>
</g>
<g transform="translate(0,202)" stroke-width="0.9">
<line x1="176" y1="194" x2="176" y2="183" stroke="#00f"/><line x1="177" y1="194" x2="177" y2="188" stroke="#f00"/>
<line x1="198" y1="194" x2="198" y2="160" stroke="#00f"/><line x1="199" y1="194" x2="199" y2="167" stroke="#f00"/>
<line x1="202" y1="194" x2="202" y2="13" stroke="#00f"/><line x1="203.5" y1="194" x2="203.5" y2="2" stroke="#f00"/>
<line x1="205" y1="194" x2="205" y2="70" stroke="#00f"/><line x1="206.5" y1="194" x2="206.5" y2="81" stroke="#f00"/>
<line x1="208" y1="194" x2="208" y2="137" stroke="#00f"/><line x1="209" y1="194" x2="209" y2="148" stroke="#f00"/>
<line x1="210.5" y1="194" x2="210.5" y2="132" stroke="#00f"/><line x1="211.5" y1="194" x2="211.5" y2="148" stroke="#f00"/>
<line x1="213" y1="194" x2="213" y2="143" stroke="#00f"/><line x1="214" y1="194" x2="214" y2="154" stroke="#f00"/>
<line x1="215.5" y1="194" x2="215.5" y2="160" stroke="#00f"/><line x1="216.5" y1="194" x2="216.5" y2="160" stroke="#f00"/>
<line x1="218" y1="194" x2="218" y2="154" stroke="#00f"/><line x1="219" y1="194" x2="219" y2="160" stroke="#f00"/>
<line x1="220.5" y1="194" x2="220.5" y2="160" stroke="#00f"/><line x1="221.5" y1="194" x2="221.5" y2="160" stroke="#f00"/>
<line x1="223" y1="194" x2="223" y2="154" stroke="#00f"/><line x1="224" y1="194" x2="224" y2="154" stroke="#f00"/>
<line x1="225.5" y1="194" x2="225.5" y2="177" stroke="#00f"/><line x1="226.5" y1="194" x2="226.5" y2="165" stroke="#f00"/>
<line x1="228" y1="194" x2="228" y2="160" stroke="#00f"/><line x1="229" y1="194" x2="229" y2="160" stroke="#f00"/>
<line x1="230.5" y1="194" x2="230.5" y2="154" stroke="#00f"/><line x1="231.5" y1="194" x2="231.5" y2="160" stroke="#f00"/>
<line x1="233" y1="194" x2="233" y2="154" stroke="#00f"/><line x1="234" y1="194" x2="234" y2="160" stroke="#f00"/>
<line x1="235.5" y1="194" x2="235.5" y2="131" stroke="#00f"/><line x1="236.5" y1="194" x2="236.5" y2="148" stroke="#f00"/>
<line x1="238" y1="194" x2="238" y2="124" stroke="#00f"/><line x1="239" y1="194" x2="239" y2="137" stroke="#f00"/>
<line x1="240.5" y1="194" x2="240.5" y2="171" stroke="#00f"/><line x1="241.5" y1="194" x2="241.5" y2="165" stroke="#f00"/>
<line x1="243" y1="194" x2="243" y2="154" stroke="#00f"/><line x1="244" y1="194" x2="244" y2="148" stroke="#f00"/>
<line x1="245.5" y1="194" x2="245.5" y2="143" stroke="#00f"/><line x1="246.5" y1="194" x2="246.5" y2="154" stroke="#f00"/>
<line x1="248" y1="194" x2="248" y2="148" stroke="#00f"/><line x1="249" y1="194" x2="249" y2="148" stroke="#f00"/>
<line x1="250.5" y1="194" x2="250.5" y2="143" stroke="#00f"/><line x1="251.5" y1="194" x2="251.5" y2="160" stroke="#f00"/>
<line x1="253" y1="194" x2="253" y2="165" stroke="#00f"/><line x1="254" y1="194" x2="254" y2="160" stroke="#f00"/>
<line x1="255.5" y1="194" x2="255.5" y2="154" stroke="#00f"/><line x1="256.5" y1="194" x2="256.5" y2="160" stroke="#f00"/>
<line x1="258" y1="194" x2="258" y2="131" stroke="#00f"/><line x1="259" y1="194" x2="259" y2="160" stroke="#f00"/>
<line x1="260.5" y1="194" x2="260.5" y2="154" stroke="#00f"/><line x1="261.5" y1="194" x2="261.5" y2="154" stroke="#f00"/>
<line x1="263" y1="194" x2="263" y2="177" stroke="#00f"/><line x1="264" y1="194" x2="264" y2="177" stroke="#f00"/>
<line x1="265.5" y1="194" x2="265.5" y2="154" stroke="#00f"/><line x1="266.5" y1="194" x2="266.5" y2="160" stroke="#f00"/>
</g>
</svg>
<div class="lg" style="left:1302px;top:387px;width:76px;height:30px"><i style="left:2px;top:2px;background:#00f"></i><span class="u" style="left:16px;top:0">Tx:&nbsp; 55.9 kbps</span><i style="left:2px;top:16px;background:#f00"></i><span class="u" style="left:16px;top:14px">Rx:&nbsp; 6.6 kbps</span></div>
<div class="lg" style="left:1302px;top:588px;width:94px;height:31px"><i style="left:2px;top:2px;background:#00f"></i><span class="u" style="left:16px;top:1px">Tx Packet:&nbsp; 8 p/s</span><i style="left:2px;top:17px;background:#f00"></i><span class="u" style="left:16px;top:15px">Rx Packet:&nbsp; 10 p/s</span></div>

</div></body></html>
